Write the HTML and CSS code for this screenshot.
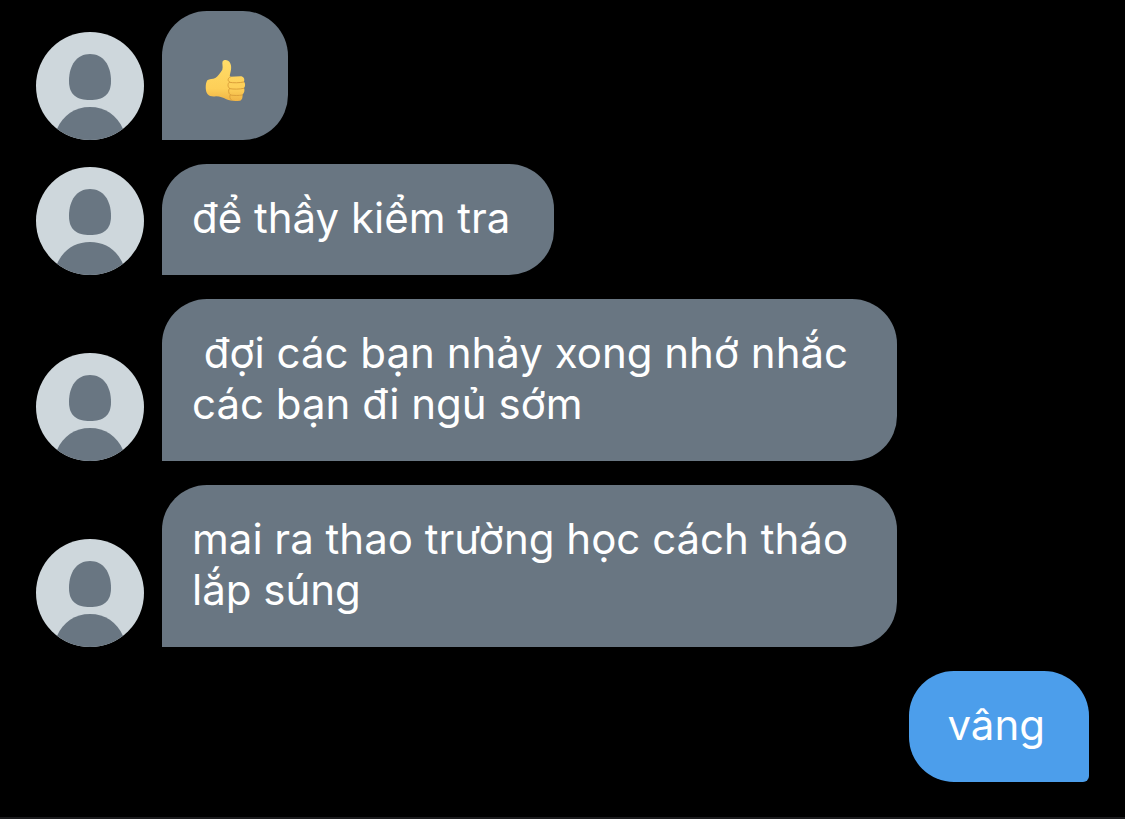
FILE: index.html
```
<!DOCTYPE html>
<html lang="vi">
<head>
	<meta charset="utf-8" />
	<meta name="viewport" content="width=device-width,initial-scale=1.0" />
	<title>Tin nhắn</title>
	<link rel="stylesheet" href="styles.css">
</head>
<body>
<!-- shared avatar -->
<svg class="defs" aria-hidden="true">
	<symbol id="avatar" viewBox="0 0 108 108">
		<rect width="108" height="108" fill="#ced7dc"/>
		<path fill="#697682" d="M54 22C67 22 75 33 75 49C75 63 67 68 54 68S33 63 33 49C33 33 41 22 54 22Z"/>
		<path fill="#697682" d="M18 108L21 97C27 83 39 75 54 75S81 83 87 97L90 108Z"/>
	</symbol>
</svg>
<main class="chat">
	<div class="message">
		<svg class="avatar"><use href="#avatar"/></svg>
		<div class="bubble emoji">
			<svg class="thumb" viewBox="26 26 126 132" role="img" aria-label="👍">
				<defs>
					<linearGradient id="skin" x1="0" y1="0" x2="0" y2="1">
						<stop offset="0" stop-color="#ffdc68"/>
						<stop offset="0.7" stop-color="#fdcf58"/>
						<stop offset="1" stop-color="#f0b445"/>
					</linearGradient>
				</defs>
				<path fill="url(#skin)" d="M36 90C42 85 52 87 60 83C68 78 74 68 81 58C84 49 79 39 82 33C87 26 99 28 104 37C110 48 107 60 104 72C103 77 103 79 106 79L135 78C145 78 149 86 146 94C150 98 151 107 146 113C149 119 147 129 141 133C143 140 140 149 134 151C119 153 105 152 93 147C83 142 75 139 62 138C52 140 42 138 37 132C30 124 29 101 36 90Z"/>
				<path fill="none" stroke="#dca03a" stroke-width="3" stroke-linecap="round" d="M105 80C97 82 96 92 103 95C96 99 97 111 103 114C98 118 99 130 105 133C102 137 103 145 108 149M103 96C115 98 131 98 145 95M103 115C116 117 132 117 145 114M105 134C116 136 130 136 141 134"/>
			</svg>
		</div>
	</div>
	<div class="message">
		<svg class="avatar"><use href="#avatar"/></svg>
		<p class="bubble">để thầy kiểm tra</p>
	</div>
	<div class="message">
		<svg class="avatar"><use href="#avatar"/></svg>
		<p class="bubble"> đợi các bạn nhảy xong nhớ nhắc các bạn đi ngủ sớm</p>
	</div>
	<div class="message">
		<svg class="avatar"><use href="#avatar"/></svg>
		<p class="bubble">mai ra thao trường học cách tháo lắp súng</p>
	</div>
	<div class="message mine">
		<p class="bubble">vâng</p>
	</div>
</main>
<footer class="bottom"></footer>
</body>
</html>
```
FILE: styles.css
```
* {
	margin: 0;
	padding: 0;
	box-sizing: border-box;
}
body {
	background: #000;
	color: #fff;
	font-family: Inter, "Noto Sans", sans-serif;
	font-size: 42px;
	line-height: 51px;
}
.defs {
	display: none;
}
.chat {
	display: flex;
	flex-direction: column;
	gap: 24px;
	padding: 11px 36px 35px;
}
.message {
	display: flex;
	align-items: flex-end;
	gap: 18px;
}
.avatar {
	flex: none;
	width: 108px;
	height: 108px;
	border-radius: 50%;
}
.bubble {
	max-width: 735px;
	padding: 28px 44px 32px 30px;
	background: #697682;
	border-radius: 45px 45px 45px 0;
	white-space: pre-wrap;
}
.emoji {
	padding: 48px 42px 37px;
	white-space: normal;
}
.thumb {
	display: block;
	width: 42px;
	height: 44px;
}
.mine {
	justify-content: flex-end;
}
.mine .bubble {
	padding-left: 38px;
	background: #4c9eeb;
	border-radius: 45px 45px 6px 45px;
}
.bottom {
	border-top: 2px solid #1b1b1d;
}
```
